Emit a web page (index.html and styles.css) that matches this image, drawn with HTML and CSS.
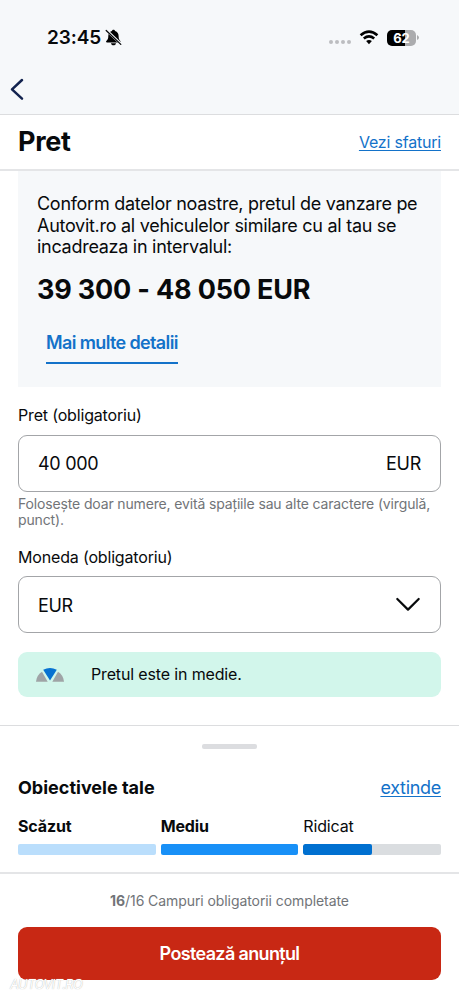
FILE: index.html
```html
<!DOCTYPE html>
<html lang="ro">
<head>
<meta charset="utf-8">
<meta name="viewport" content="width=device-width, initial-scale=1">
<title>Pret</title>
<link rel="stylesheet" href="styles.css">
</head>
<body>
<div class="screen">
  <header class="top">
    <div class="status">
      <div class="status-left">
        <span class="clock">23:45</span>
        <svg class="bell" width="17" height="17" viewBox="0 0 17 17">
          <path d="M8.500 .8C7.600 .8 7 1.400 6.900 2.100C4.400 2.800 3.300 4.800 3.300 7C3.300 9.800 2.700 10.700 1.300 11.900C.8 12.500 1.100 13.400 2 13.400H14.700C15.600 13.400 15.800 12.500 15.300 11.900C14.100 10.700 13.600 9.800 13.600 7C13.600 4.800 12.500 2.800 10.100 2.100C10 1.400 9.400 .8 8.500 .8Z"/>
          <path d="M6 14.200H11C10.800 15.700 9.800 16.300 8.500 16.300S6.200 15.700 6 14.200Z"/>
          <path class="bell-gap" d="M1 .8L16.400 15.400"/>
          <path class="bell-slash" d="M1.200 1.500L15.800 15.400"/>
        </svg>
      </div>
      <div class="status-right">
        <span class="dots"><i></i><i></i><i></i><i></i></span>
        <svg class="wifi" width="20" height="15" viewBox="0 0 20 15">
          <path class="arc" d="M1.600 5.300Q10-2.200 18.400 5.300"/>
          <path class="arc" d="M4.800 8.500Q10 4.200 15.200 8.500"/>
          <path d="M7.100 11.100Q10 8.900 12.900 11.100L10 14.300Z"/>
        </svg>
        <span class="battery"><span class="level">62</span><svg width="2" height="5" viewBox="0 0 2 5"><path d="M0 0Q2 1 2 2.500T0 5Z"/></svg></span>
      </div>
    </div>
    <svg class="back" width="16" height="24" viewBox="0 0 16 24"><path d="M13 3L3 12.400L13 21.700"/></svg>
  </header>

  <div class="title-row">
    <h1>Pret</h1>
    <a class="link tips">Vezi sfaturi</a>
  </div>

  <main class="form">
    <section class="estimate">
      <p class="intro">Conform datelor noastre, pretul de vanzare pe<br>Autovit.ro al vehiculelor similare cu al tau se<br>incadreaza in intervalul:</p>
      <p class="range">39 300 - 48 050 EUR</p>
      <a class="details">Mai multe detalii</a>
    </section>

    <div class="label price-label">Pret (obligatoriu)</div>
    <div class="field"><span class="amount">40 000</span><span class="unit">EUR</span></div>
    <p class="hint">Folosește doar numere, evită spațiile sau alte caractere (virgulă, punct).</p>

    <div class="label currency-label">Moneda (obligatoriu)</div>
    <div class="field currency"><span class="unit">EUR</span>
      <svg class="chevron" width="26" height="16" viewBox="0 0 26 16"><path d="M2.300 2L13 12.600L23.700 2"/></svg>
    </div>

    <div class="notice">
      <svg width="28" height="16" viewBox="0 0 28 16">
        <path class="side" d="M0 14.700C.5 10 2.500 6.500 6 4.700L11.700 14.700Z"/>
        <path class="side" d="M28 14.700C27.500 10 25.500 6.500 22 4.700L16.300 14.700Z"/>
        <path class="middle" d="M7.200 2.700Q14-.9 20.800 2.700L14 13.400Z"/>
      </svg>
      <span>Pretul este in medie.</span>
    </div>
  </main>

  <section class="goals">
    <div class="grabber"></div>
    <div class="goals-head"><h2>Obiectivele tale</h2><a class="link expand">extinde</a></div>
    <div class="levels">
      <div class="goal low"><b>Scăzut</b><div class="bar"></div></div>
      <div class="goal medium"><b>Mediu</b><div class="bar"></div></div>
      <div class="goal high"><span>Ridicat</span><div class="bar"><div class="fill"></div></div></div>
    </div>
  </section>

  <footer class="bottom">
    <p class="progress"><b>16</b>/16 Campuri obligatorii completate</p>
    <button class="submit">Postează anunțul</button>
    <div class="watermark">AUTOVIT.RO</div>
  </footer>
</div>
</body>
</html>
```
FILE: styles.css
```css
* { box-sizing: border-box; }
body { margin: 0; background: #fff; color: #080a0c; font-family: Inter, "Liberation Sans", sans-serif; }
h1, h2, p { margin: 0; }
svg { display: block; flex: none; }
.screen { width: 459px; height: 998px; overflow: hidden; display: flex; flex-direction: column; }
.top { height: 115px; flex: none; background: #f6f8fa; border-bottom: 1px solid #dcdddf; padding-top: 26px; }
.status { display: flex; justify-content: space-between; height: 24px; padding: 0 40px 0 47px; }
.status-left, .status-right { display: flex; align-items: center; }
.clock { font-size: 19px; font-weight: 600; line-height: 24px; letter-spacing: -.1px; }
.bell { margin: -1px 0 0 4px; }
.bell-gap { stroke: #f6f8fa; stroke-width: 2.600; }
.bell-slash { stroke: #080a0c; stroke-width: 1.300; stroke-linecap: round; }
.dots { display: flex; gap: 2px; margin: 8px 8px 0 0; }
.dots i { width: 4px; height: 4px; border-radius: 50%; background: #bcbdc0; }
.wifi .arc { fill: none; stroke: #000; stroke-width: 2.600; }
.wifi { margin: -1px 8px 0 0; }
.battery { display: flex; align-items: center; gap: 1px; margin-top: -1px; }
.battery path { fill: #a9aaac; }
.level { width: 29px; height: 16px; border-radius: 5px; background: linear-gradient(90deg, #000 62%, #abacae 62%); color: #fff; font-size: 13px; font-weight: 700; line-height: 16px; text-align: center; }
.back { margin: 27px 0 0 9px; }
.back path { fill: none; stroke: #13234f; stroke-width: 2.500; stroke-linecap: round; stroke-linejoin: round; }
.title-row { height: 56px; flex: none; border-bottom: 2px solid #e4e5e7; padding: 0 18px; display: flex; align-items: center; justify-content: space-between; }
h1 { font-size: 27px; font-weight: 700; letter-spacing: -.3px; line-height: 32px; }
.link { color: #1372c9; text-decoration: underline; text-underline-offset: 2px; text-decoration-thickness: 1px; }
.tips { font-size: 16px; letter-spacing: -.2px; }
.form { padding: 0 18px; height: 554px; flex: none; }
.estimate { height: 216px; background: #f6f8fa; padding: 22px 19px 0; }
.intro { font-size: 18px; line-height: 21.700px; letter-spacing: -.28px; white-space: nowrap; }
.range { font-size: 27px; font-weight: 700; line-height: 34px; letter-spacing: -.18px; margin-top: 15px; white-space: nowrap; }
.details { display: inline-block; margin: 23px 0 0 9px; height: 34px; font-size: 18px; font-weight: 600; line-height: 26px; letter-spacing: -.63px; color: #1372c9; border-bottom: 2px solid #1372c9; white-space: nowrap; }
.label { font-size: 16px; line-height: 20px; letter-spacing: -.17px; }
.price-label { margin-top: 18px; }
.field { height: 57px; margin-top: 10px; border: 1px solid #a3a5a8; border-radius: 9px; padding: 0 19px; display: flex; align-items: center; justify-content: space-between; font-size: 18px; letter-spacing: -.3px; }
.currency { margin-top: 9px; }
.currency .unit { padding-top: 1px; }
.hint { color: #717478; font-size: 14px; line-height: 16.200px; letter-spacing: -.15px; margin-top: 4px; }
.currency-label { margin-top: 19px; }
.chevron path { fill: none; stroke: #080a0c; stroke-width: 2.200; stroke-linecap: round; stroke-linejoin: round; }
.notice { height: 45px; margin-top: 19px; border-radius: 9px; background: #d2f6eb; padding: 0 0 1px 18px; display: flex; align-items: center; gap: 27px; font-size: 16px; letter-spacing: -.15px; }
.notice svg { margin-top: 1px; }
.side { fill: #9fa4a6; }
.middle { fill: #0772d1; }
.goals { height: 149px; flex: none; border-top: 1px solid #dcdddf; border-bottom: 2px solid #e4e5e7; padding: 18px 18px 0; }
.grabber { width: 55px; height: 5px; margin: 0 auto; border-radius: 2px; background: #dcdde0; }
.goals-head { display: flex; justify-content: space-between; align-items: center; margin-top: 26px; height: 24px; font-size: 18px; }
.expand { letter-spacing: -.3px; }
h2 { font-size: 18px; font-weight: 700; }
.levels { display: grid; grid-template-columns: repeat(3, 1fr); gap: 5px; margin-top: 17px; font-size: 16px; line-height: 20px; letter-spacing: -.15px; }
.goal b { font-weight: 700; }
.bar { height: 11px; margin-top: 8px; border-radius: 2px; overflow: hidden; background: #dadde0; }
.low .bar { background: #badefc; }
.medium .bar { background: #1890f7; }
.fill { width: 50%; height: 11px; border-radius: 2px; background: #0070d0; }
.bottom { padding: 17px 18px 0; position: relative; }
.progress { text-align: center; color: #717478; font-size: 14px; line-height: 20px; letter-spacing: -.08px; }
.submit { display: block; width: 100%; height: 53px; margin-top: 16px; border: 0; border-radius: 9px; background: #c82814; color: #fff; font: 600 18px/53px Inter, "Liberation Sans", sans-serif; letter-spacing: -.65px; padding: 0; }
.watermark { position: absolute; left: 10px; top: 101px; color: #fff; font: italic 13px/18px Inter, sans-serif; letter-spacing: -.6px; text-shadow: 0 0 1px #a9a9a9; }
```
